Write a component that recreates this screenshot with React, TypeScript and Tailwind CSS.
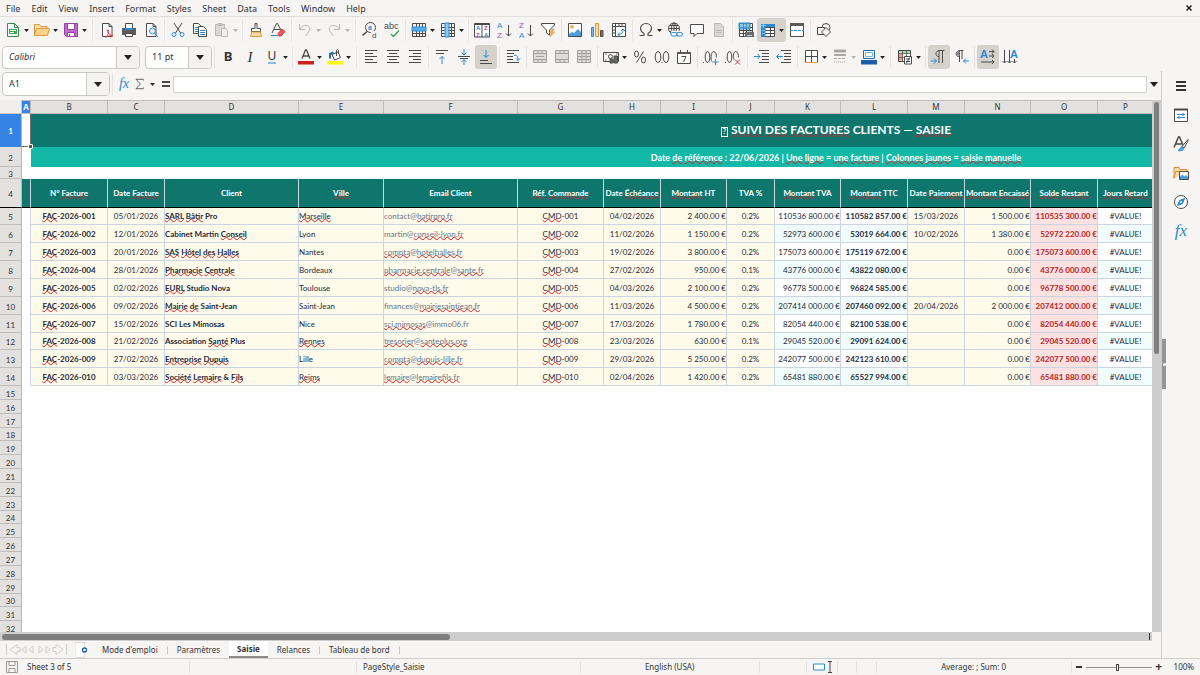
import type { ReactNode } from "react";
import clsx from "clsx";

const menus = ["File", "Edit", "View", "Insert", "Format", "Styles", "Sheet", "Data", "Tools", "Window", "Help"];

const columns = [
  { letter: "A", width: "w-[9px]", title: "" },
  { letter: "B", width: "w-[77px]", title: "N° {Facture}" },
  { letter: "C", width: "w-[57px]", title: "Date {Facture}" },
  { letter: "D", width: "w-[134px]", title: "Client" },
  { letter: "E", width: "w-[85px]", title: "{Ville}" },
  { letter: "F", width: "w-[134px]", title: "Email Client" },
  { letter: "G", width: "w-[86px]", title: "{Réf}. {Commande}" },
  { letter: "H", width: "w-[57px]", title: "Date {Échéance}" },
  { letter: "I", width: "w-[66px]", title: "{Montant} HT" },
  { letter: "J", width: "w-[48px]", title: "TVA %" },
  { letter: "K", width: "w-[66px]", title: "{Montant} TVA" },
  { letter: "L", width: "w-[67px]", title: "{Montant} TTC" },
  { letter: "M", width: "w-[57px]", title: "Date {Paiement}" },
  { letter: "N", width: "w-[66px]", title: "{Montant} {Encaissé}" },
  { letter: "O", width: "w-[67px]", title: "{Solde} {Restant}" },
  { letter: "P", width: "w-[56px]", title: "{Jours} {Retard}" },
];

// words in braces are flagged by the spell checker
const invoices = [
  ["05/01/2026", "{SARL} {Bâtir} Pro", "{Marseille}", "contact@{batirpro.fr}", "04/02/2026", "2 400.00 €", "0.2%", "110536 800.00 €", "110582 857.00 €", "15/03/2026", "1 500.00 €", "110535 300.00 €"],
  ["12/01/2026", "Cabinet Martin {Conseil}", "Lyon", "martin@{conseil-lyon.fr}", "11/02/2026", "1 150.00 €", "0.2%", "52973 600.00 €", "53019 664.00 €", "10/02/2026", "1 380.00 €", "52972 220.00 €"],
  ["20/01/2026", "{SAS} {Hôtel} {des} {Halles}", "Nantes", "{compta}@{hotelhalles.fr}", "19/02/2026", "3 800.00 €", "0.2%", "175073 600.00 €", "175119 672.00 €", "", "0.00 €", "175073 600.00 €"],
  ["28/01/2026", "{Pharmacie} {Centrale}", "Bordeaux", "{pharmacie.centrale}@{sante.fr}", "27/02/2026", "950.00 €", "0.1%", "43776 000.00 €", "43822 080.00 €", "", "0.00 €", "43776 000.00 €"],
  ["02/02/2026", "{EURL} Studio Nova", "Toulouse", "studio@{nova-tls.fr}", "04/03/2026", "2 100.00 €", "0.2%", "96778 500.00 €", "96824 585.00 €", "", "0.00 €", "96778 500.00 €"],
  ["09/02/2026", "{Mairie} {de} Saint-Jean", "Saint-Jean", "finances@{mairiesaintjean.fr}", "11/03/2026", "4 500.00 €", "0.2%", "207414 000.00 €", "207460 092.00 €", "20/04/2026", "2 000.00 €", "207412 000.00 €"],
  ["15/02/2026", "SCI Les Mimosas", "Nice", "{sci.mimosas}@immo06.fr", "17/03/2026", "1 780.00 €", "0.2%", "82054 440.00 €", "82100 538.00 €", "", "0.00 €", "82054 440.00 €"],
  ["21/02/2026", "Association {Santé} Plus", "{Rennes}", "{tresorier}@{santeplus.org}", "23/03/2026", "630.00 €", "0.1%", "29045 520.00 €", "29091 624.00 €", "", "0.00 €", "29045 520.00 €"],
  ["27/02/2026", "{Entreprise} {Dupuis}", "Lille", "{compta}@{dupuis-lille.fr}", "29/03/2026", "5 250.00 €", "0.2%", "242077 500.00 €", "242123 610.00 €", "", "0.00 €", "242077 500.00 €"],
  ["03/03/2026", "{Société} {Lemaire} & {Fils}", "{Reims}", "{lemaire}@{lemairefils.fr}", "02/04/2026", "1 420.00 €", "0.2%", "65481 880.00 €", "65527 994.00 €", "", "0.00 €", "65481 880.00 €"],
];

const emptyRows = Array.from({ length: 18 }, (_, i) => i + 15);

function Spelled({ text }: { text: string }) {
  return (
    <>
      {text.split(/(\{[^}]*\})/).map((part, i) =>
        part.startsWith("{") ? (
          <span
            key={i}
            className="underline decoration-[#e01b24] decoration-wavy decoration-[0.5px] underline-offset-[-1px] [text-decoration-skip-ink:none]"
          >
            {part.slice(1, -1)}
          </span>
        ) : (
          part
        )
      )}
    </>
  );
}

const INK = "#4a4a48";
const BLUE = "#2a8bd0";
const GREY = "#b9b8b6";

function Glyph({ children, x, y, size = 8, fill = INK, bold = false }: { children: string; x: number; y: number; size?: number; fill?: string; bold?: boolean }) {
  return (
    <text x={x} y={y} fontSize={size} fill={fill} stroke="none" fontWeight={bold ? 700 : 400} fontFamily='"Liberation Sans", sans-serif'>
      {children}
    </text>
  );
}

const page = <path d="M3.5 1.5h6.5l3 3v10h-9.500z M10 1.500v3h3" fill="#fff" />;
const grid = <path d="M1.500 1.500h13v13h-13z M1.500 5.500h13 M1.500 8.500h13 M1.500 11.500h13 M5.500 1.500v13 M8.500 1.500v13 M11.500 1.500v13" fill="none" />;

const icons: Record<string, ReactNode> = {
  New: (
    <g stroke="#309048">
      <path d="M2.500 1.500h7l4 4v9h-11z" fill="#fff" />
      <path d="M9.500 1.500v4h4" />
      <path d="M4 7h8v5H4z" fill="#3fa35a" stroke="none" />
      <path d="M5 8.500h6M5 10.500h4" stroke="#fff" />
    </g>
  ),
  Open: (
    <g stroke="#e0973e">
      <path d="M.5 13.500v-11h5l1.500 2h6v3" fill="#fbdca6" />
      <path d="M.5 13.500l2-7h13l-2 7z" fill="#fcd28c" />
    </g>
  ),
  Save: (
    <g stroke="#93429f">
      <path d="M1.500 1.500h13v13h-11l-2-2z" fill="#c06ccb" />
      <path d="M4.500 1.500h7v6h-7z" fill="#fff" />
      <path d="M4.500 10.500h7v4h-7z" fill="#fff" />
      <path d="M6.500 12v2.500" />
    </g>
  ),
  "Export as PDF": (
    <>
      {page}
      <path d="M7 15c2-2 3.500-5 2.500-7-.5-.8-1.500 0-1 1.500.6 2 3 4 5.500 4.500-3-.5-6 0-7.500 1.500" stroke="#e0393e" />
    </>
  ),
  Print: (
    <>
      <path d="M4.500 6V1.500h7V6" fill="#fff" />
      <path d="M1 6h14v7H1z" fill="#5b5b59" stroke="none" />
      <path d="M4 6h8v2H4z" fill="#2a8bd0" stroke="none" />
      <path d="M4.500 11.500h7v3h-7z" fill="#fff" />
    </>
  ),
  "Print Preview": (
    <>
      {page}
      <circle cx="9.500" cy="9" r="3" stroke={BLUE} fill="#e5f2fb" />
      <path d="M12 11.500l3 3.500" stroke={BLUE} />
    </>
  ),
  Cut: (
    <>
      <path d="M4 1l6.500 10M12 1L5.500 11" />
      <circle cx="4" cy="12.500" r="2" stroke={BLUE} />
      <circle cx="12" cy="12.500" r="2" stroke={BLUE} />
    </>
  ),
  Copy: (
    <>
      <path d="M1.500 1.500h5l3 3v7h-8z" fill="#fff" />
      <path d="M3 5.500h4M3 7.500h4M3 9.500h3" stroke={BLUE} />
      <path d="M6.500 4.500h5l3 3v7h-8z" fill="#fff" />
      <path d="M8 8.500h5M8 10.500h5M8 12.500h5" stroke={BLUE} />
    </>
  ),
  Paste: (
    <g stroke={GREY}>
      <path d="M1.500 2.500h9v11h-9z" fill="#d9d8d6" />
      <path d="M4 1.500h4v2H4z" fill="#c9c8c6" />
      <path d="M7.500 6.500h4l2 2v6h-6z" fill="#f1f0ef" />
    </g>
  ),
  "Clone Formatting": (
    <>
      <path d="M7 1.500h2v5h3.500v3h-9v-3H7z" fill="#fff" />
      <path d="M4 10h8.500l1 4.500h-11z" fill="#fbdca6" stroke="#e0973e" />
    </>
  ),
  "Clear Formatting": (
    <>
      <path d="M2 11L6.500 1.500h1L12 10M4 7.500h6" />
      <path d="M1 13.500h7" stroke={BLUE} />
      <path d="M8 11.500l4-4.500 3 2.500-4 4.500H9z" fill="#f0595d" stroke="#d6373c" />
    </>
  ),
  Undo: <path d="M2.500 2v5.500H8M2.500 7.500C5 3 11 2 12.500 5.500c1 3-2 6-4 8.500" stroke={GREY} />,
  Redo: <path d="M13.500 2v5.500H8M13.500 7.500C11 3 5 2 3.500 5.500c-1 3 2 6 4 8.500" stroke={GREY} />,
  "Find & Replace": (
    <>
      <circle cx="8.500" cy="5.500" r="5" />
      <path d="M5 9.500L.5 13.500" strokeWidth="1.500" />
      <Glyph x={6} y={7.500} size={7} fill={BLUE} bold>a</Glyph>
      <path d="M9 9h6v7H9z" fill="#f6f5f4" stroke="none" />
      <Glyph x={10} y={15.500} size={8}>d</Glyph>
    </>
  ),
  Spelling: (
    <>
      <Glyph x={0} y={7} size={9}>abc</Glyph>
      <path d="M7 12l2.500 2.500L15 8.500" stroke="#36a35a" strokeWidth="1.300" />
    </>
  ),
  Row: (
    <>
      {grid}
      <path d="M1 5h14v4H1z" fill="#5aaee6" stroke={BLUE} />
    </>
  ),
  Column: (
    <>
      {grid}
      <path d="M5 1h4v14H5z" fill="#8cc8f0" stroke={BLUE} />
    </>
  ),
  Sort: (
    <>
      <path d="M.5 1.500h15v13.500H.5z M.5 2.500h15 M8 2v13" fill="#fff" />
      <Glyph x={2} y={8} size={6} fill={BLUE} bold>A</Glyph>
      <Glyph x={2} y={15} size={6} fill="#a04bb0" bold>Z</Glyph>
      <Glyph x={10} y={8} size={6} fill="#a04bb0" bold>Z</Glyph>
      <Glyph x={10} y={15} size={6} fill={BLUE} bold>A</Glyph>
    </>
  ),
  "Sort Ascending": (
    <>
      <Glyph x={1} y={6} size={8} fill={BLUE}>A</Glyph>
      <Glyph x={1} y={15.500} size={8} fill="#a04bb0">Z</Glyph>
      <path d="M12.500 3v11M10 11.500l2.500 2.500 2.500-2.500" />
    </>
  ),
  "Sort Descending": (
    <>
      <Glyph x={1} y={6} size={8} fill="#a04bb0">Z</Glyph>
      <Glyph x={1} y={15.500} size={8} fill={BLUE}>A</Glyph>
      <path d="M12.500 3v11M10 11.500l2.500 2.500 2.500-2.500" />
    </>
  ),
  AutoFilter: (
    <>
      <path d="M1.500 1.500h13v1.500L9.500 8v5l-3-2V8L1.500 3z" fill="#fff" />
      <path d="M12 7l-2.500 4h2L10 15l4.500-5h-2L14 7z" fill="#f7b05b" stroke="#e0973e" strokeWidth=".6" />
    </>
  ),
  Image: (
    <>
      <path d="M1.500 1.500h13v13h-13z" fill="#fff" />
      <path d="M2 14v-2l3-2 2 1 4-4 3 3v4z" fill="#4b9fdc" stroke="none" />
      <circle cx="5" cy="4.800" r="1.500" fill="#f7b05b" stroke="#e0973e" strokeWidth=".6" />
    </>
  ),
  Chart: (
    <>
      <path d="M2.500 5.500h2v9h-2z" fill="#7fbce9" stroke={BLUE} />
      <path d="M6.500 1.500h3v13h-3z" fill="#fbdca6" stroke="#e0973e" />
      <path d="M11.500 8.500h2.500v6h-2.500z" fill="#777" />
    </>
  ),
  "Pivot Table": (
    <>
      <path d="M1.500 1.500h13v13h-13z M1.500 4.500h13 M4.500 1.500v13 M8 1.500v3 M11 1.500v3 M1.500 8h3 M1.500 11h3" fill="#fff" />
      <path d="M7 12.500c4 0 5-2 5-5M10 9l2-2 2 2M9 10.500l-2 2 2 2" stroke={BLUE} />
    </>
  ),
  "Special Character": <path d="M1.500 13.500H6v-2C3.500 10 2.500 8.500 2.500 6.500c0-3 2.500-5 5.500-5s5.500 2 5.500 5c0 2-1 3.500-3.500 5v2h4.500" strokeWidth="1.100" />,
  Hyperlink: (
    <>
      <circle cx="7" cy="6.500" r="5.500" />
      <path d="M1.500 6.500h11M7 1v10M3 3.500h8M3 9.500h5" />
      <ellipse cx="7" cy="6.500" rx="2.500" ry="5.500" />
      <path d="M4 9h12v6H4z" fill="#f6f5f4" stroke="none" />
      <rect x="4" y="10.500" width="6" height="3.500" rx="1.700" stroke={BLUE} />
      <rect x="9.500" y="10.500" width="6" height="3.500" rx="1.700" stroke={BLUE} />
    </>
  ),
  Comment: <path d="M1.500 2.500h13v9H8l-3 3v-3H1.500z" fill="#fff" />,
  "Headers and Footers": (
    <g stroke={GREY}>
      <path d="M3.500 1.500h6l3 3v10h-9z" fill="#d9d8d6" />
      <path d="M5.500 8.500h5M5.500 10.500h5" />
    </g>
  ),
  "Define Print Area": (
    <>
      {grid}
      <path d="M1 1h11v6H1z" fill="#5aaee6" stroke={BLUE} fillOpacity=".7" />
      <path d="M7 10h9v5H7z" fill="#6a6a68" stroke="none" />
      <path d="M9 13.500h5M9 9.500h5" stroke="#a8d2f0" />
    </>
  ),
  "Freeze Rows and Columns": (
    <>
      <path d="M2.500 2.500h12v12h-12z M2.500 5.500h12 M2.500 8.500h12 M2.500 11.500h12 M10.500 2.500v12" fill="#fff" />
      <path d="M1 2h14v3H1z M1 2h4.500v13H1z" fill="#2a8bd0" stroke="none" />
      <path d="M3.500 0v6M0 3.500h6M2 8.500h3M2 11.500h3" stroke="#a8d2f0" strokeWidth=".8" />
    </>
  ),
  "Split Window": (
    <>
      <path d="M1.500 1.500h13v13h-13z" fill="#fff" />
      <path d="M1 1h14v3H1z" fill="#5b5b59" stroke="none" />
      <path d="M1 8.500h14" stroke={BLUE} strokeDasharray="3 1" />
    </>
  ),
  "Show Draw Functions": (
    <>
      <circle cx="10" cy="5.500" r="4" />
      <path d="M1.500 5.500h7v7h-7z" fill="#f6f5f4" />
      <path d="M10 5.500l4.500 4.500-4.500 4.500L5.500 10z" fill="#f6f5f4" />
    </>
  ),
  "Font Color": (
    <>
      <path d="M4 9.500L7.500 1h1L12 9.500M5 7h6" strokeWidth="1.300" />
      <path d="M0 12h16v3.500H0z" fill="#c9211e" stroke="none" />
    </>
  ),
  Highlighting: (
    <>
      <path d="M5 5.500l6-2.500 2.500 5.500-6 2.500z" fill="#fff" />
      <path d="M9.500 7V1.500c0-1 2-1 2 0V4" />
      <path d="M3 9.500V5l3.500-1.500" stroke="#1f6fa8" strokeWidth="2" />
      <path d="M0 12h16v3.500H0z" fill="#ff0" stroke="none" />
    </>
  ),
  "Align Left": <path d="M2 1.500h12M2 4.500h8M2 7.500h12M2 10.500h8M2 13.500h12" />,
  "Center Horizontally": <path d="M2 1.500h12M4 4.500h8M2 7.500h12M4 10.500h8M2 13.500h12" />,
  "Align Right": <path d="M2 1.500h12M6 4.500h8M2 7.500h12M6 10.500h8M2 13.500h12" />,
  "Align Top": (
    <>
      <path d="M2 1.500h12M2 4.500h8" />
      <path d="M8 15V7.500M5.500 10L8 7.500l2.500 2.500" stroke={BLUE} />
    </>
  ),
  "Center Vertically": (
    <>
      <path d="M2 7.500h12M4 9.500h8" />
      <path d="M8 0v5.500M5.500 3.500L8 6l2.500-2.500M8 16v-5M5.500 13L8 10.500l2.500 2.500" stroke={BLUE} />
    </>
  ),
  "Align Bottom": (
    <>
      <path d="M2 11.500h8M2 14.500h12" />
      <path d="M8 1v7.500M5.500 6L8 8.500 10.500 6" stroke={BLUE} />
    </>
  ),
  "Wrap Text": (
    <>
      <path d="M2 1.500h12M2 4.500h7M2 7.500h6M2 10.500h6M2 13.500h12" />
      <path d="M9 6.500c3-1 4 1 4 5M11 9.500l2 2 2-2" stroke={BLUE} />
    </>
  ),
  "Merge and Center": <path d="M1.500 1.500h13v12h-13z M1.500 4.500h13M1.500 10.500h13M6 1.500v3M10 1.500v3M6 10.500v3M10 10.500v3M4 7.500h8" stroke="#a3a2a0" fill="#dddcda" />,
  "Merge Cells": <path d="M1.500 1.500h13v12h-13z M1.500 4.500h13M1.500 10.500h13M6 1.500v3M10 1.500v3M6 10.500v3M10 10.500v3" stroke="#a3a2a0" fill="#dddcda" />,
  "Unmerge Cells": <path d="M1.500 1.500h13v12h-13z M1.500 4.500h13M1.500 10.500h13M1.500 7.500h13M6 1.500v12M10 1.500v12" stroke="#a3a2a0" fill="#dddcda" />,
  Currency: (
    <>
      <path d="M.5 3.500h15v9H.5z" fill="#fff" />
      <circle cx="7.500" cy="7.500" r="2" />
      <path d="M2 5h1.500M2 11h1.500M13 5h1.500" />
      <path d="M7 14v-4h3v4zM11 14V7h3.500v7z" fill="#6a6a68" />
    </>
  ),
  Percent: (
    <>
      <ellipse cx="4.500" cy="5" rx="2" ry="3" />
      <ellipse cx="11.500" cy="11" rx="2" ry="3" />
      <path d="M11.500 2.500l-7 11" />
    </>
  ),
  Number: (
    <>
      <ellipse cx="4" cy="8" rx="2.800" ry="5.500" />
      <ellipse cx="12" cy="8" rx="2.800" ry="5.500" />
      <path d="M7.500 13.500h1" />
    </>
  ),
  Date: (
    <>
      <path d="M1.500 3.500h13v11h-13z" fill="#fff" />
      <path d="M1 3h14v2H1z" fill="#5b5b59" stroke="none" />
      <path d="M4.500 1v2M11.500 1v2" />
      <path d="M5.500 7.500H10L7.500 13" />
    </>
  ),
  "Add Decimal Place": (
    <>
      <path d="M0 13.500h1" />
      <ellipse cx="4.500" cy="8" rx="2.300" ry="5.500" />
      <path d="M9 12.500c-1.500-2-1.500-9 1.500-10 2.500.5 3 3 2.800 6" />
      <path d="M12.500 10v6M9.500 13h6" stroke={BLUE} />
    </>
  ),
  "Delete Decimal Place": (
    <>
      <path d="M0 13.500h1" />
      <ellipse cx="4.500" cy="8" rx="2.300" ry="5.500" />
      <path d="M9 10.500c-1-2-1-7 1.500-8 2.500.5 3 3 2.800 6" />
      <path d="M10 10.500l5 5M15 10.500l-5 5" stroke="#e0393e" />
    </>
  ),
  "Increase Indent": (
    <>
      <path d="M5 1.500h10M8 4.500h7M8 7.500h7M8 10.500h7M5 13.500h10" />
      <path d="M0 7.500h6M3.500 5L6 7.500 3.500 10" stroke={BLUE} />
    </>
  ),
  "Decrease Indent": (
    <>
      <path d="M5 1.500h10M8 4.500h7M8 7.500h7M8 10.500h7M5 13.500h10" />
      <path d="M.5 7.500H7M3 5L.5 7.500 3 10" stroke={BLUE} />
    </>
  ),
  Borders: (
    <>
      <path d="M2.500 1.500h12v12h-12z M8.500 1.500v12 M2.500 7.500h12" fill="#fff" />
      <path d="M2 13.500h13" stroke="#e0973e" />
    </>
  ),
  "Border Style": (
    <g stroke="#a9a8a6">
      <path d="M2 2h12" strokeWidth="3" />
      <path d="M2 6h12" strokeWidth="2" />
      <path d="M2 9.500h12" strokeDasharray="3 1" />
      <path d="M2 13h12" strokeDasharray="1 1" />
    </g>
  ),
  "Border Color": (
    <>
      <path d="M2.500 1.500h11v8h-11z" fill="#fff" stroke="#1f6fa8" />
      <path d="M4.500 3.500h7v4h-7z" stroke="#77b5e0" />
      <path d="M0 11h16v4.500H0z" fill="#1c5fa8" stroke="none" />
    </>
  ),
  "Conditional Formatting": (
    <>
      <path d="M1.500 1.500h12v11h-12z" fill="#fff" />
      <path d="M2 2h11v2.500H2z" fill="#a5dfb4" stroke="none" />
      <path d="M2 5h4v7H2z" fill="#f49a98" stroke="none" />
      <path d="M1.500 4.500h12M1.500 8.500h12M5.500 1.500v11M9.500 1.500v11" strokeWidth=".7" />
      <path d="M7.500 7.500h7v7.500h-7z" fill="#fff" />
      <path d="M9 10h4M9 12.500h4M12.500 8.500l-3 5.500" />
    </>
  ),
  "Left-To-Right": (
    <>
      <path d="M8 14V1.500M11.500 14V1.500M8 7.500C4 8 4 2 8 1.500h5.500" />
      <path d="M0 12h5.500M3 9.500L5.500 12 3 14.500" stroke={BLUE} />
    </>
  ),
  "Right-To-Left": (
    <>
      <path d="M6.500 13V1.500M9 10V1.500M6.500 7.500C2 8 2 2 6.500 1.500h4" />
      <path d="M6.500 2v5C3 7 3 2.500 6.500 2z" fill="#888" stroke="none" />
      <path d="M10.500 12H16M13 9.500L10.500 12l2.500 2.500" stroke={BLUE} />
    </>
  ),
  "Text direction from left to right": (
    <>
      <Glyph x={0} y={9} size={11} fill={BLUE} bold>A</Glyph>
      <path d="M9 2.500h5M12 .5l2 2-2 2M9 7h5M12 5l2 2-2 2M1 13h13M12 11l2 2-2 2" />
    </>
  ),
  "Text direction from top to bottom": (
    <>
      <Glyph x={8} y={9} size={11} fill={BLUE} bold>A</Glyph>
      <path d="M2.500 1v13M.5 12l2 2 2-2M7.500 1v13M5.500 12l2 2 2-2M12.500 10v4M10.500 12l2 2 2-2" />
    </>
  ),
  Properties: (
    <>
      <path d="M1.500 2.500h13v12h-13z" fill="#fff" />
      <path d="M1 1.500h14v2H1z" fill={INK} stroke="none" />
      <path d="M4 7.500h8M4 10.500h8M10 6v3M6 9v3" stroke={BLUE} />
    </>
  ),
  Styles: (
    <>
      <path d="M1 11.500L5.500 1h1l3.500 8M2.500 8h6" strokeWidth="1.500" />
      <path d="M15 3.500L9 10.500l2 1.500 4-7z" fill="#fff" />
      <path d="M8.500 11c-2 .5-1 3-3.500 3.500 3 .8 5.500 0 5.500-2z" fill="#5aaee6" stroke={BLUE} />
    </>
  ),
  Gallery: (
    <>
      <path d="M1 13.500v-11h5l1 2h7v3M1 13.500l1.500-7h6" fill="#fbdca6" stroke="#e58a36" />
      <path d="M6.500 6.500h9v8h-9z" fill="#fff" />
      <path d="M7 14v-2.500l2.500-2 2 2 1.500-1.500 2 2V14z" fill="#4b9fdc" stroke="none" />
    </>
  ),
  Navigator: (
    <>
      <circle cx="8" cy="8" r="6.500" fill="#fff" />
      <path d="M11.500 4.500l-2 5-5 2 2-5z" fill="#2a8bd0" stroke={BLUE} />
      <circle cx="8" cy="8" r="1" fill="#fff" stroke="none" />
    </>
  ),
};

function Icon({ name }: { name: string }) {
  return (
    <svg viewBox="0 0 16 16" className="size-4 shrink-0 overflow-visible" fill="none" stroke={INK} strokeWidth="1" aria-hidden="true">
      {icons[name]}
    </svg>
  );
}

function Arrow({ muted = false, large = false }: { muted?: boolean; large?: boolean }) {
  return (
    <svg viewBox="0 0 8 5" className={clsx("shrink-0", large ? "h-[5px] w-2" : "h-[3px] w-[5px]")} aria-hidden="true">
      <path d="M0 0h8L4 5z" fill={muted ? "#b5b4b2" : "#222"} />
    </svg>
  );
}

function Tool({ name, menu = false, muted = false, pressed = false, children }: { name: string; menu?: boolean; muted?: boolean; pressed?: boolean; children?: ReactNode }) {
  return (
    <button
      type="button"
      aria-label={name}
      aria-pressed={pressed}
      className={clsx("flex h-6 shrink-0 items-center rounded-[3px]", menu ? "w-[29px]" : "w-[22px]", pressed && "bg-[#d5d2ce]")}
    >
      <span className="flex w-[22px] shrink-0 items-center justify-center">{children ?? <Icon name={name} />}</span>
      {menu && <Arrow muted={muted} />}
    </button>
  );
}

function Sep({ wide = false }: { wide?: boolean }) {
  return (
    <div className={clsx("flex shrink-0 justify-center", wide ? "w-[7px]" : "w-[5px]")}>
      <div className="h-[22px] w-px bg-[#e6e4e2]" />
    </div>
  );
}

function Combo({ label, value, className, width }: { label: string; value: string; className?: string; width: string }) {
  return (
    <div className={clsx("relative flex h-[23px] shrink-0 overflow-hidden rounded-[4px] border border-[#cdc7c2] bg-white", width)}>
      <select aria-label={label} className={clsx("w-full appearance-none bg-transparent px-1.5 text-[9px] outline-none", className)}>
        <option>{value}</option>
      </select>
      <span className="pointer-events-none absolute inset-y-0 right-0 flex w-[23px] items-center justify-center border-l border-[#cdc7c2] bg-[#f4f3f2]">
        <Arrow large />
      </span>
    </div>
  );
}

function RowHead({ n, freeze = false }: { n: number; freeze?: boolean }) {
  return (
    <th
      scope="row"
      className={clsx(
        "border-r border-b border-r-[#b9b8b6] p-0 pt-0.5 text-center align-middle text-[8px] leading-none",
        n === 1 ? "border-b-[#3584e4] bg-[#3584e4] font-bold text-white" : "bg-[#e2e1e0] font-normal text-[#333]",
        freeze ? "border-b-black" : n > 1 && "border-b-[#bebdbb]"
      )}
    >
      {n}
    </th>
  );
}

function Cell({ children = "", tone, className }: { children?: string; tone: string; className?: string }) {
  return (
    <td className={clsx("overflow-hidden border-r border-b border-[#cbd5e1] p-0 align-middle leading-none whitespace-nowrap", tone, className)}>
      <Spelled text={children} />
    </td>
  );
}

function Sheet() {
  return (
    <table className="w-[1641px] table-fixed border-separate border-spacing-0 bg-white font-[Lato,sans-serif] text-[8px] text-[#1e293b]">
      <colgroup>
        <col className="w-[22px]" />
        {columns.map((c) => (
          <col key={c.letter} className={c.width} />
        ))}
        <col />
      </colgroup>
      <thead className="font-['Noto_Sans',sans-serif] text-[8px] leading-none">
        <tr className="h-[14px]">
          <td className="border-r border-b border-[#c9c8c6] bg-[#f0efee] p-0" />
          {columns.map((c) => (
            <th
              key={c.letter}
              scope="col"
              className={clsx(
                "border-t border-r border-b border-[#bebdbb] p-0",
                c.letter === "A" ? "bg-[#3584e4] font-bold text-white" : "bg-[#e2e1e0] font-normal text-[#333]"
              )}
            >
              {c.letter}
            </th>
          ))}
          <td className="bg-[#e2e1e0] p-0" />
        </tr>
      </thead>
      <tbody>
        <tr className="h-[33px]">
          <RowHead n={1} />
          <td className="relative border-r border-b border-[#6b6b6b] p-0">
            <span className="absolute -right-[3px] -bottom-[3px] z-10 size-[5px] rounded-[1px] border border-white bg-[#555]" />
          </td>
          <td colSpan={16} className="bg-[#0f766e] p-0 text-center text-[12px] leading-none font-bold text-white">
            <span className="mr-[3px] inline-flex h-[10px] w-[7px] items-center justify-center border border-white text-[7px]">?</span>
            <Spelled text="{SUIVI} {DES} {FACTURES} CLIENTS — {SAISIE}" />
          </td>
        </tr>
        <tr className="h-5">
          <RowHead n={2} />
          <td className="p-0" />
          <td colSpan={16} className="bg-[#14b8a6] p-0 text-center text-[9px] leading-none font-bold text-white">
            <Spelled text="Date {de} {référence} : 22/06/2026 | {Une} {ligne} = {une} {facture} | {Colonnes} {jaunes} = {saisie} {manuelle}" />
          </td>
        </tr>
        <tr className="h-3">
          <RowHead n={3} />
          <td colSpan={17} className="p-0" />
        </tr>
        <tr className="h-[29px]">
          <RowHead n={4} freeze />
          {columns.map((c) => (
            <td
              key={c.letter}
              className="border-r border-b border-r-[#cbd5e1] border-b-black bg-[#0f766e] p-0 text-center leading-none font-bold whitespace-nowrap text-white"
            >
              <Spelled text={c.title} />
            </td>
          ))}
          <td className="border-b border-b-black bg-[#0f766e] p-0" />
        </tr>
        {invoices.map(([date, client, city, email, due, ht, rate, vat, ttc, paid, received, balance], i) => {
          const n = i + 5;
          const num = String(i + 1).padStart(3, "0");
          const band = i % 2 ? "bg-[#f0fdfa]" : "bg-white";
          const input = "bg-[#fffbeb]";
          return (
            <tr key={n} className={n % 7 === 5 ? "h-[17px]" : "h-[18px]"}>
              <RowHead n={n} />
              <td className="border-r border-[#cbd5e1] p-0" />
              <Cell tone={input} className="text-center font-bold">{`{FAC}-2026-${num}`}</Cell>
              <Cell tone={input} className="text-center">{date}</Cell>
              <Cell tone={input} className="font-bold">{client}</Cell>
              <Cell tone={input}>{city}</Cell>
              <Cell tone={input} className="text-[#64748b]">{email}</Cell>
              <Cell tone={input} className="text-center">{`{CMD}-${num}`}</Cell>
              <Cell tone={input} className="text-center">{due}</Cell>
              <Cell tone={input} className="text-right">{ht}</Cell>
              <Cell tone={input} className="text-center">{rate}</Cell>
              <Cell tone={band} className="text-right">{vat}</Cell>
              <Cell tone={band} className="text-right font-bold">{ttc}</Cell>
              <Cell tone={input} className="text-center">{paid}</Cell>
              <Cell tone={input} className="text-right">{received}</Cell>
              <Cell tone="bg-[#fee2e2]" className="text-right font-bold text-[#b91c1c]">{balance}</Cell>
              <Cell tone={band} className="text-center">#VALUE!</Cell>
              <td className="p-0" />
            </tr>
          );
        })}
        {emptyRows.map((n) => (
          <tr key={n} className={n % 6 ? "h-[14px]" : "h-[13px]"}>
            <RowHead n={n} />
            <td colSpan={17} className="p-0" />
          </tr>
        ))}
      </tbody>
    </table>
  );
}

function StandardBar() {
  return (
    <div className="flex h-[26px] items-center pl-0.5">
      <Tool name="New" menu />
      <Tool name="Open" menu />
      <Tool name="Save" menu />
      <Sep wide />
      <Tool name="Export as PDF" />
      <Tool name="Print" />
      <Tool name="Print Preview" />
      <Sep />
      <Tool name="Cut" />
      <Tool name="Copy" />
      <Tool name="Paste" menu muted />
      <Sep />
      <Tool name="Clone Formatting" />
      <Tool name="Clear Formatting" />
      <Sep />
      <Tool name="Undo" menu muted />
      <Tool name="Redo" menu muted />
      <Sep wide />
      <Tool name="Find & Replace" />
      <Tool name="Spelling" />
      <Sep />
      <Tool name="Row" menu />
      <Tool name="Column" menu />
      <Sep />
      <Tool name="Sort" />
      <Tool name="Sort Ascending" />
      <Tool name="Sort Descending" />
      <Tool name="AutoFilter" />
      <Sep />
      <Tool name="Image" />
      <Tool name="Chart" />
      <Tool name="Pivot Table" />
      <Sep />
      <Tool name="Special Character" menu />
      <Tool name="Hyperlink" />
      <Tool name="Comment" />
      <Tool name="Headers and Footers" />
      <Sep />
      <Tool name="Define Print Area" />
      <Tool name="Freeze Rows and Columns" menu pressed />
      <Tool name="Split Window" />
      <Sep />
      <Tool name="Show Draw Functions" />
    </div>
  );
}

function FormattingBar() {
  return (
    <div className="flex h-[28px] items-center pl-0.5">
      <Combo label="Font Name" value="Calibri" width="w-[138px]" className="italic" />
      <div className="w-[5px] shrink-0" />
      <Combo label="Font Size" value="11 pt" width="w-[67px]" />
      <Sep />
      <Tool name="Bold">
        <span className="text-[13px] font-bold">B</span>
      </Tool>
      <Tool name="Italic">
        <span className="font-['Liberation_Serif',serif] text-[15px] italic">I</span>
      </Tool>
      <Tool name="Underline" menu>
        <span className="border-b-2 border-[#8abbe3] text-xs leading-3">U</span>
      </Tool>
      <Sep />
      <Tool name="Font Color" menu />
      <Tool name="Highlighting" menu />
      <Sep wide />
      <Tool name="Align Left" />
      <Tool name="Center Horizontally" />
      <Tool name="Align Right" />
      <Sep />
      <Tool name="Align Top" />
      <Tool name="Center Vertically" />
      <Tool name="Align Bottom" pressed />
      <Sep />
      <Tool name="Wrap Text" />
      <Sep />
      <Tool name="Merge and Center" />
      <Tool name="Merge Cells" />
      <Tool name="Unmerge Cells" />
      <Sep />
      <Tool name="Currency" menu />
      <Tool name="Percent" />
      <Tool name="Number" />
      <Tool name="Date" />
      <Sep />
      <Tool name="Add Decimal Place" />
      <Tool name="Delete Decimal Place" />
      <Sep wide />
      <Tool name="Increase Indent" />
      <Tool name="Decrease Indent" />
      <Sep />
      <Tool name="Borders" menu />
      <Tool name="Border Style" menu muted />
      <Tool name="Border Color" menu />
      <Sep wide />
      <Tool name="Conditional Formatting" menu />
      <Sep />
      <Tool name="Left-To-Right" pressed />
      <Tool name="Right-To-Left" />
      <Sep />
      <Tool name="Text direction from left to right" pressed />
      <Tool name="Text direction from top to bottom" />
    </div>
  );
}

function FormulaBar() {
  return (
    <div className="flex h-[29px] shrink-0 items-center pb-[3px] pl-0.5">
      <div className="flex h-[24px] w-[108px] shrink-0 overflow-hidden rounded-[4px] border border-[#cdc7c2] bg-white">
        <input aria-label="Name Box" defaultValue="A1" className="min-w-0 flex-1 px-1.5 text-[9px] outline-none" />
        <button type="button" aria-label="Cell names" className="flex w-[23px] items-center justify-center border-l border-[#cdc7c2] bg-[#f4f3f2]">
          <Arrow large />
        </button>
      </div>
      <Sep />
      <button type="button" aria-label="Function Wizard" className="w-[18px] font-['Liberation_Serif',serif] text-sm leading-none text-[#2a8bd0] italic">
        fx
      </button>
      <button type="button" aria-label="Select Function" className="flex w-[22px] items-center justify-between">
        <svg viewBox="0 0 12 14" className="h-3 w-[13px]" fill="none" stroke={INK} aria-hidden="true">
          <path d="M10.500 3V1.500H2L7 7l-5 5.500h8.500V11" />
        </svg>
        <Arrow />
      </button>
      <button type="button" aria-label="Formula" className="ml-1 flex w-3.5 flex-col items-center gap-[2px]">
        <span className="h-[2px] w-2 bg-[#4a4a48]" />
        <span className="h-[2px] w-2 bg-[#4a4a48]" />
      </button>
      <input aria-label="Input line" className="h-[17px] min-w-0 flex-1 border border-[#d5d3d1] bg-white px-1 text-[9px] outline-none" />
      <button type="button" aria-label="Expand Formula Bar" className="flex w-[14px] items-center justify-center">
        <Arrow large />
      </button>
    </div>
  );
}

function SheetTabs() {
  const tab = "flex h-full items-center px-[9px]";
  return (
    <div className="flex h-[17px] shrink-0 items-center">
      <button type="button" aria-label="Scroll sheets" className="ml-1.5 w-[61px]">
        <svg viewBox="0 0 61 13" className="h-[13px] w-full" fill="none" stroke="#cfcecc" aria-hidden="true">
          <path d="M.5 1v11M11 1.500L4 6.500l7 5v-3h3v-4h-3zM20 3l-4 3.500 4 3.500zM27 3l-4 3.500 4 3.500zM33 3l4 3.500-4 3.500zM40 3l4 3.500-4 3.500zM50 1.500l7 5-7 5v-3h-3v-4h3zM60.500 1v11" />
        </svg>
      </button>
      <button type="button" aria-label="Add Sheet" className="ml-2 flex h-4 w-[18px] items-center">
        <svg viewBox="0 0 14 16" className="h-4 w-3.5" fill="none" aria-hidden="true">
          <path d="M0 .500h9.500v15H0z" fill="#fff" stroke="#dddbd9" />
          <circle cx="9.500" cy="8" r="2" fill="#fff" stroke="#1c5fa8" strokeWidth="1.300" />
        </svg>
      </button>
      <div role="tablist" aria-label="Sheets" className="flex h-full items-center text-[8px] leading-none">
        <button type="button" role="tab" className={tab}>Mode d'emploi</button>
        <div className="h-2 w-px bg-[#c9c8c6]" />
        <button type="button" role="tab" className={tab}>Paramètres</button>
        <button type="button" role="tab" aria-selected="true" className="flex h-full items-center border-b-2 border-[#8b8b89] bg-white px-2 font-bold">Saisie</button>
        <button type="button" role="tab" className={tab}>Relances</button>
        <div className="h-2 w-px bg-[#c9c8c6]" />
        <button type="button" role="tab" className={tab}>Tableau de bord</button>
        <div className="h-2 w-px bg-[#c9c8c6]" />
      </div>
    </div>
  );
}

function Sidebar() {
  const decks = ["Properties", "Styles", "Gallery", "Navigator"];
  return (
    <aside className="relative w-[39px] shrink-0 border-l border-[#d0cecc]">
      <button type="button" aria-label="Hide sidebar" className="absolute top-[268px] left-0 flex h-[50px] w-1 items-center justify-center bg-[#949494]">
        <span className="size-[3px] rounded-full bg-white" />
      </button>
      <div className="flex flex-col items-center">
        <button type="button" aria-label="Sidebar Settings" className="flex h-[29px] flex-col items-center justify-center gap-[2px]">
          <span className="h-[2px] w-[10px] bg-[#333]" />
          <span className="h-[2px] w-[10px] bg-[#333]" />
          <span className="h-[2px] w-[10px] bg-[#333]" />
        </button>
        {decks.map((name) => (
          <button key={name} type="button" aria-label={name} className="flex h-[29px] items-center">
            <Icon name={name} />
          </button>
        ))}
        <button type="button" aria-label="Functions" className="h-[29px] font-['Liberation_Serif',serif] text-[17px] leading-none text-[#2a8bd0] italic">
          fx
        </button>
      </div>
    </aside>
  );
}

function StatusBar() {
  return (
    <footer className="flex h-[17px] shrink-0 items-center border-t border-[#d0cecc] text-[8px] leading-none">
      <div className="flex w-[189px] items-center gap-2 pl-1.5">
        <svg viewBox="0 0 12 12" className="size-3" fill="none" stroke="#9a9997" aria-hidden="true">
          <path d="M.5.500h11v11H.500z M3 .500h6v4H3z M3 7.500h6v4H3z" />
        </svg>
        <span className="pl-px">Sheet 3 of 5</span>
      </div>
      <div className="h-3 w-[168px] border-x border-[#e2e0de]" />
      <div className="flex-1 pl-1.5">PageStyle_Saisie</div>
      <div className="flex h-3 w-[180px] items-center justify-center border-x border-[#e2e0de]">English (USA)</div>
      <div className="w-[46px]" />
      <div className="flex h-3 w-[31px] items-center gap-[3px] border-l border-[#e2e0de] pl-1.5">
        <svg viewBox="0 0 20 12" className="h-3 w-5 shrink-0" fill="none" aria-hidden="true">
          <path d="M.5 3h11v6H.5z" stroke={BLUE} fill="#fff" />
          <path d="M15 .5h4M17 .5v11M15 11.500h4" stroke="#444" />
        </svg>
      </div>
      <div className="h-3 w-5 border-x border-[#e2e0de]" />
      <div className="h-3 w-5 border-r border-[#e2e0de]" />
      <div className="flex h-3 w-[195px] items-center justify-center border-r border-[#e2e0de]">Average: ; Sum: 0</div>
      <div className="flex items-center gap-1 pr-1.5 pl-1">
        <button type="button" aria-label="Zoom Out" className="h-[2px] w-1.5 bg-[#333]" />
        <input
          type="range"
          aria-label="Zoom"
          defaultValue={49}
          className="h-[9px] w-[66px] appearance-none bg-transparent bg-[linear-gradient(#8f8f8d,#8f8f8d)] bg-[length:100%_1px] bg-center bg-no-repeat [&::-webkit-slider-thumb]:h-[7px] [&::-webkit-slider-thumb]:w-[3px] [&::-webkit-slider-thumb]:appearance-none [&::-webkit-slider-thumb]:border [&::-webkit-slider-thumb]:border-[#444] [&::-webkit-slider-thumb]:bg-white"
        />
        <button type="button" aria-label="Zoom In" className="flex w-1.5 justify-center text-xs leading-none font-bold">+</button>
        <span className="pl-2">100%</span>
      </div>
    </footer>
  );
}

export default function App() {
  return (
    <div className="flex h-screen flex-col overflow-hidden bg-[#f6f5f4] font-['Noto_Sans',sans-serif] text-[#333]">
      <header className="shrink-0">
        <nav className="flex h-[17px] items-center border-b border-[#e2e0de] pl-1.5 text-[9px] leading-none">
          <div className="flex flex-1 gap-[11px]">
            {menus.map((m) => (
              <button key={m} type="button">{m}</button>
            ))}
          </div>
          <button type="button" aria-label="Close Document" className="pr-2">
            <svg viewBox="0 0 6 6" className="size-1.5" stroke="#222" strokeWidth="1.500" aria-hidden="true">
              <path d="M.5.5l5 5M5.500.5l-5 5" />
            </svg>
          </button>
        </nav>
        <StandardBar />
        <FormattingBar />
      </header>
      <div className="flex min-h-0 flex-1">
        <main className="flex min-w-0 flex-1 flex-col">
          <FormulaBar />
          <div className="flex min-h-0 flex-1">
            <div className="flex min-w-0 flex-1 flex-col">
              <div className="min-h-0 flex-1 overflow-hidden bg-white">
                <Sheet />
              </div>
              <div className="flex h-[9px] shrink-0 items-center justify-between bg-[#cdcdcd] px-0.5">
                <div className="h-[6px] w-[39%] rounded-full bg-[#7e7e7e]" />
                <div className="h-[7px] w-px bg-[#333]" />
              </div>
            </div>
            <div className="mb-[9px] flex w-[9px] shrink-0 justify-center bg-[#cdcdcd] pt-0.5">
              <div className="h-[252px] w-[5px] rounded-full bg-[#7e7e7e]" />
            </div>
          </div>
          <SheetTabs />
        </main>
        <Sidebar />
      </div>
      <StatusBar />
    </div>
  );
}
